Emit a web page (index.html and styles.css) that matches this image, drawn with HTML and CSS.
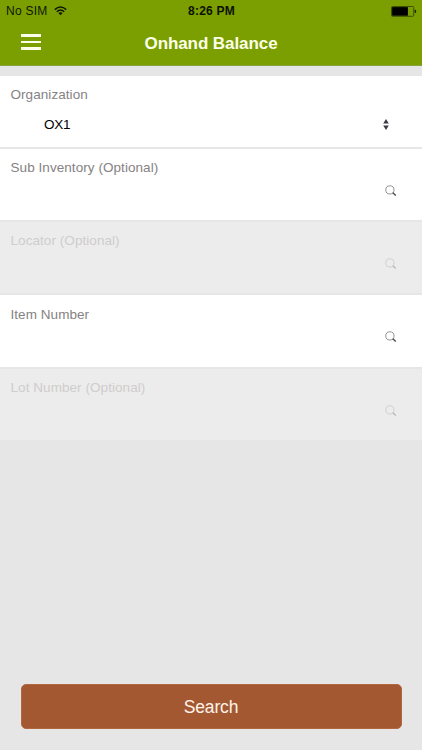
FILE: index.html
```html
<!DOCTYPE html>
<html lang="en">
<head>
<meta charset="utf-8">
<title>Onhand Balance</title>
<link rel="stylesheet" href="styles.css">
</head>
<body>
<svg class="defs" aria-hidden="true">
  <symbol id="lens" viewBox="0 0 12 12">
    <circle cx="4.9" cy="4.9" r="4.1" fill="none" stroke="#777" stroke-width=".8"/>
    <path d="M7.8 7.8 10.8 10.6" fill="none" stroke="#444" stroke-width="1.3"/>
  </symbol>
</svg>
<header class="header">
  <div class="status">
    <div class="carrier">
      <span class="sim">No SIM</span>
      <svg class="wifi" viewBox="0 0 13 10" fill="none" stroke="#101800">
        <path d="M.8 3.6Q6.5-1.6 12.2 3.6M2.8 5.8Q6.5 2.3 10.2 5.8" stroke-width="1.5"/>
        <path d="M6.5 9.2 4.4 7.1Q6.5 5.4 8.6 7.1Z" fill="#101800" stroke="none"/>
      </svg>
    </div>
    <span class="time">8:26 PM</span>
    <svg class="battery" viewBox="0 0 26 11">
      <rect x=".5" y=".5" width="22.2" height="9.8" rx="1" fill="none" stroke="#2f4000" stroke-width=".8"/>
      <rect x="1.1" y="1.1" width="15.8" height="8.6" fill="#000"/>
      <path d="M23.6 3.8h.7q.9.2.9 1.6t-.9 1.6h-.7z" fill="#1c2600"/>
    </svg>
  </div>
  <div class="navbar">
    <div class="menu"><i></i><i></i><i></i></div>
    <h1 class="title">Onhand Balance</h1>
  </div>
</header>
<main class="form">
  <section class="field">
    <label class="label">Organization</label>
    <div class="value"><span class="org">OX1</span>
      <svg class="sort" viewBox="0 0 6 11" fill="#3a3c40"><path d="M3 0 5.8 4.5H.2zM3 11 5.8 6.5H.2z"/></svg>
    </div>
  </section>
  <section class="field">
    <label class="label">Sub Inventory (Optional)</label>
    <div class="value"><svg class="lens"><use href="#lens"/></svg></div>
  </section>
  <section class="field disabled">
    <label class="label">Locator (Optional)</label>
    <div class="value"><svg class="lens"><use href="#lens"/></svg></div>
  </section>
  <section class="field">
    <label class="label">Item Number</label>
    <div class="value"><svg class="lens"><use href="#lens"/></svg></div>
  </section>
  <section class="field disabled">
    <label class="label">Lot Number (Optional)</label>
    <div class="value"><svg class="lens"><use href="#lens"/></svg></div>
  </section>
</main>
<footer class="footer"><button class="search">Search</button></footer>
</body>
</html>
```
FILE: styles.css
```css
* { box-sizing: border-box; }
body {
  margin: 0;
  height: 750px;
  display: flex;
  flex-direction: column;
  background: #e6e6e6;
  font-family: "Liberation Sans", Arial, sans-serif;
  overflow: hidden;
}
.defs { display: none; }
.header {
  flex: none;
  height: 66px;
  background: #7b9e00;
  border-bottom: 1px solid #86a43a;
}
.status {
  height: 22px;
  display: grid;
  grid-template-columns: 1fr auto 1fr;
  align-items: center;
  padding: 0 5px 0 6px;
  font-size: 12px;
  line-height: 22px;
  color: #101800;
}
.carrier { display: flex; align-items: center; }
.sim { width: 48px; letter-spacing: .25px; }
.wifi { width: 13px; height: 10px; }
.time { font-weight: bold; color: #0c1200; letter-spacing: .2px; }
.battery { width: 26px; height: 11px; justify-self: end; }
.navbar {
  height: 43px;
  display: grid;
  grid-template-columns: 42px 1fr 42px;
}
.menu {
  display: flex;
  flex-direction: column;
  gap: 4px;
  padding: 12px 1px 0 20.6px;
}
.menu i { height: 2.6px; background: #fcffe8; }
.title {
  margin: 0;
  text-align: center;
  font-size: 17px;
  line-height: 43px;
  font-weight: bold;
  letter-spacing: -.08px;
  color: #fbffe8;
}
.form {
  display: grid;
  gap: 2px;
  grid-auto-rows: 71.3px;
  padding-top: 9.6px;
}
.field { background: #fff; padding: 10.1px 24.6px 0 10.5px; }
.label {
  display: block;
  font-size: 13.5px;
  line-height: 18px;
  color: #858283;
  letter-spacing: .06px;
  white-space: nowrap;
}
.value {
  display: flex;
  align-items: center;
  justify-content: flex-end;
  height: 25px;
  margin-top: 7.9px;
}
.org { margin: 0 auto 0 33.5px; font-size: 13.5px; letter-spacing: -.2px; color: #000; }
.sort { width: 6px; height: 11px; margin-right: 8.4px; }
.lens { width: 12px; height: 12px; margin-top: -13px; }
.disabled { background: #ececec; }
.disabled .label { color: #cfcdcd; }
.disabled .lens { opacity: .3; }
.footer { margin-top: auto; padding: 0 20.5px 21px; }
.search {
  display: block;
  width: 100%;
  height: 45px;
  padding: 1px 0 0;
  border: 1px solid #b3673f;
  border-radius: 5px;
  background: #a35832;
  color: #fff3ea;
  font: 17.5px/43px "Liberation Sans", Arial, sans-serif;
  letter-spacing: -.15px;
}
```
